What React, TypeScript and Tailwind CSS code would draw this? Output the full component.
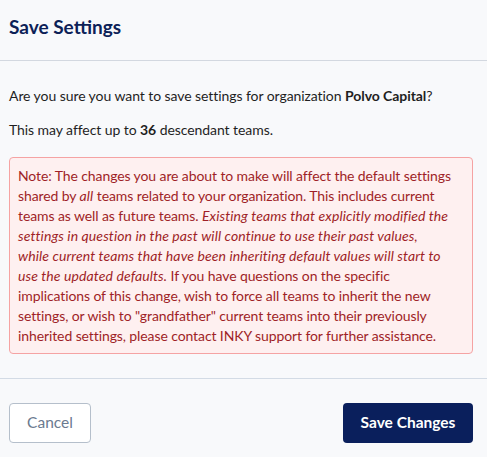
export default function App() {
  return (
    <div className="min-h-screen w-full bg-[#f8f9fb] font-['Lato','Noto_Sans',sans-serif] text-[#1f1f1f]">
      {/* header */}
      <div className="h-[61px] border-b border-[#d3d8e0] px-[9px] pt-[16px]">
        <h2 className="text-[19px] font-bold leading-[22px] text-[#0c2157]">Save Settings</h2>
      </div>

      {/* body */}
      <div className="pl-[9px] pr-[14px] pt-[25px] pb-[24px] text-[14px] leading-[20px] tracking-[-0.07px]">
        <p>
          Are you sure you want to save settings for organization <b className="font-bold">Polvo Capital</b>?
        </p>
        <p className="mt-[14px]">
          This may affect up to <b className="font-bold">36</b> descendant teams.
        </p>
        <div className="mt-[17px] rounded-[4px] border border-[#f5a3a3] bg-[#fef0f0] pl-[8px] pr-[9px] pt-[8px] pb-[7px] tracking-[-0.1px] text-[#9f1f27]">
          Note: The changes you are about to make will affect the default settings shared by{" "}
          <i className="tracking-[0.1px]">all</i> teams related to your organization. This includes current teams as
          well as future teams.{" "}
          <i className="tracking-[0.1px]">
            Existing teams that explicitly modified the settings in question in the past will continue to use their past
            values,
            <br />
            while current teams that have been inheriting default values will start to use the updated defaults.
          </i>{" "}
          If you have questions on the specific implications of this change, wish to force all teams to inherit the new
          settings, or wish to "grandfather" current teams into their previously inherited settings, please contact INKY
          support for further assistance.
        </div>
      </div>

      {/* footer */}
      <div className="flex items-center justify-between border-t border-[#d3dbe5] pl-[9px] pr-[14px] pt-[24px] pb-[12px]">
        <button className="h-[40px] w-[82px] rounded-[4px] border border-[#b5bfcb] bg-white text-[15.5px] text-[#6b7a90]">
          Cancel
        </button>
        <button className="h-[40px] w-[130px] rounded-[4px] bg-[#0a1f5c] text-[15.5px] font-bold text-white">
          Save Changes
        </button>
      </div>
    </div>
  );
}
